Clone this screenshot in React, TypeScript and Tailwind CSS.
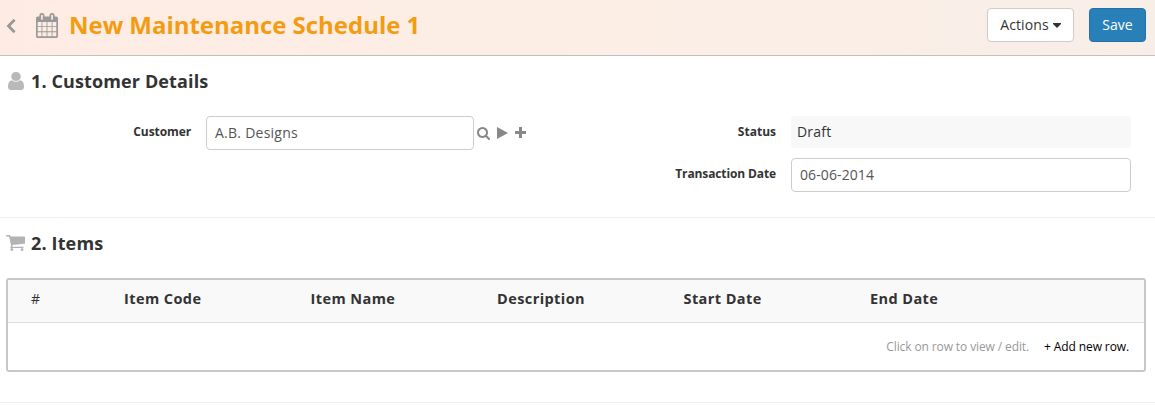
import React from "react";

const CALENDAR =
  "M192 1664h288v-288h-288v288zM544 1664h320v-288h-320v288zM192 1312h288v-320h-288v320zM544 1312h320v-320h-320v320zM192 928h288v-288h-288v288zM928 1664h320v-288h-320v288zM544 928h320v-288h-320v288zM1312 1664h288v-288h-288v288zM928 1312h320v-320h-320v320zM576 448v-288q0-13-9.5-22.5t-22.5-9.5h-64q-13 0-22.5 9.5t-9.5 22.5v288q0 13 9.5 22.5t22.5 9.5h64q13 0 22.5-9.5t9.5-22.5zM1312 1312h288v-320h-288v320zM928 928h320v-288h-320v288zM1312 928h288v-288h-288v288zM1344 448v-288q0-13-9.5-22.5t-22.5-9.5h-64q-13 0-22.5 9.5t-9.5 22.5v288q0 13 9.5 22.5t22.5 9.5h64q13 0 22.5-9.5t9.5-22.5zM1728 384v1280q0 52-38 90t-90 38h-1408q-52 0-90-38t-38-90v-1280q0-52 38-90t90-38h128v-96q0-66 47-113t113-47h64q66 0 113 47t47 113v96h384v-96q0-66 47-113t113-47h64q66 0 113 47t47 113v96h128q52 0 90 38t38 90z";
const USER =
  "M1536 1399q0 109-62.5 187t-150.5 78h-854q-88 0-150.5-78t-62.5-187q0-85 8.5-160.5t31.5-152 58.5-131 94-89 134.5-34.5q131 128 313 128t313-128q76 0 134.5 34.5t94 89 58.5 131 31.5 152 8.5 160.5zm-256-887q0 159-112.5 271.5t-271.5 112.5-271.5-112.5-112.5-271.5 112.5-271.5 271.5-112.5 271.5 112.5 112.5 271.5z";
const CART =
  "M704 1536q0 52-38 90t-90 38-90-38-38-90 38-90 90-38 90 38 38 90zm896 0q0 52-38 90t-90 38-90-38-38-90 38-90 90-38 90 38 38 90zm128-1088v512q0 24-16.5 42.5t-40.5 21.5l-1044 122q13 60 13 70 0 16-24 64h920q26 0 45 19t19 45-19 45-45 19h-1024q-26 0-45-19t-19-45q0-11 8-31.5t16-36 21.5-40 15.5-29.5l-177-823h-204q-26 0-45-19t-19-45 19-45 45-19h256q16 0 28.5 6.5t19.5 15.5 13 24.5 8 26 5.5 29.5 4.5 26h1201q26 0 45 19t19 45z";
const SEARCH =
  "M1216 832q0-185-131.5-316.5t-316.5-131.5-316.5 131.5-131.5 316.5 131.5 316.5 316.5 131.5 316.5-131.5 131.5-316.5zm512 832q0 52-38 90t-90 38q-54 0-90-38l-343-342q-179 124-399 124-143 0-273.5-55.5t-225-150-150-225-55.5-273.5 55.5-273.5 150-225 225-150 273.5-55.5 273.5 55.5 225 150 150 225 55.5 273.5q0 220-124 399l343 343q37 37 37 90z";

function Icon({ d, box, className }: { d: string; box: string; className: string }) {
  return (
    <svg viewBox={box} preserveAspectRatio="none" fill="currentColor" className={`shrink-0 ${className}`} aria-hidden="true">
      <path d={d} />
    </svg>
  );
}

const columns = ["Item Code", "Item Name", "Description", "Start Date", "End Date"];

export default function App() {
  return (
    <div className="h-[410px] w-[1155px] overflow-hidden bg-white font-['Open_Sans',sans-serif] text-[14px] leading-5 text-[#333333]">
      <header className="flex h-14 items-start border-b border-[#c0c0c0] bg-gradient-to-r from-[#feece4] via-[#fceee5] to-[#f8eee8]">
        <svg viewBox="0 0 10 16" className="mt-[18px] ml-[6px] h-4 w-[10px] shrink-0 text-[#999999]" fill="none" stroke="currentColor" strokeWidth="2.8" aria-hidden="true">
          <path d="M8.6 1.8 2.5 8l6.1 6.2" />
        </svg>
        <Icon d={CALENDAR} box="64 0 1664 1792" className="mt-[13px] ml-5 h-[25px] w-[22px] text-[#999999]" />
        <h1 className="mt-2 ml-[11px] text-[24px] leading-[34px] font-bold tracking-[-0.03px] whitespace-nowrap text-[#f39c12]">New Maintenance Schedule 1</h1>
        <div className="mt-2 mr-[9px] ml-auto flex gap-[15px]">
          <button className="flex h-[34px] w-[87px] items-center justify-center gap-1 rounded border border-[#cccccc] bg-white">
            <span className="tracking-[0.1px]">Actions</span>
            <svg viewBox="0 0 8 5" className="h-[5px] w-2" fill="currentColor" aria-hidden="true">
              <path d="M0 0h8v1L4 5 0 1z" />
            </svg>
          </button>
          <button className="h-[34px] w-[57px] rounded border border-[#2472a4] bg-[#2980b9] text-white">Save</button>
        </div>
      </header>

      <section className="h-[162px] border-b border-[#eeeeee]">
        <div className="flex h-[60px] items-start pl-2">
          <Icon d={USER} box="256 128 1280 1536" className="mt-4 h-[18px] w-4 text-[#b9b9b9]" />
          <h2 className="mt-[13px] ml-[7px] text-[18px] leading-6 font-bold tracking-[0.12px]">1. Customer Details</h2>
        </div>
        <div className="flex items-start">
          <div className="flex w-[585px] items-start">
            <label className="mt-[6px] w-[191px] text-right text-[12px] font-bold tracking-[-0.1px]">Customer</label>
            <div className="ml-[15px] flex h-[34px] w-[268px] items-center rounded border border-[#cccccc] px-2 tracking-[0.25px] text-[#555555]">A.B. Designs</div>
            <div className="mt-[11px] ml-[3px] flex text-[#888888]">
              <Icon d={SEARCH} box="64 128 1664 1664" className="h-[13px] w-[13px]" />
              <Icon d="M0 0 11 6 0 12z" box="0 0 11 12" className="ml-[7px] h-3 w-[11px]" />
              <Icon d="M4 0h3v4h4v3H7v4H4V7H0V4h4z" box="0 0 11 11" className="ml-[7px] h-[11px] w-[11px]" />
            </div>
          </div>
          <div className="flex flex-col gap-[10px]">
            <div className="flex">
              <label className="mt-[6px] w-[191px] text-right text-[12px] font-bold">Status</label>
              <div className="ml-[15px] flex h-8 w-[340px] items-center rounded-sm bg-[#f8f8f8] px-[6px] tracking-[0.2px]">Draft</div>
            </div>
            <div className="flex">
              <label className="mt-[6px] w-[191px] text-right text-[12px] font-bold tracking-[-0.12px]">Transaction Date</label>
              <div className="ml-[15px] flex h-[34px] w-[340px] items-center rounded border border-[#cccccc] px-2 tracking-[0.1px] text-[#555555]">06-06-2014</div>
            </div>
          </div>
        </div>
      </section>

      <section className="h-[185px] border-b border-[#eeeeee]">
        <div className="flex h-[60px] items-start pl-[6px]">
          <Icon d={CART} box="64 256 1664 1408" className="mt-[17px] h-4 w-[19px] text-[#b3b3b3]" />
          <h2 className="mt-[13px] ml-[6px] text-[18px] leading-6 font-bold tracking-[0.15px]">2. Items</h2>
        </div>
        <div className="mr-[9px] ml-[6px] h-[94px] rounded-[3px] border-2 border-[#c7c7c7]">
          <div className="flex h-[43px] border-b border-[#dddddd] bg-[#f9f9f9] pt-[9px] pl-[23px]">
            <div className="w-[93px]">#</div>
            {columns.map((name) => (
              <div key={name} className="w-[186.5px] text-[14.5px] font-bold tracking-[0.42px]">{name}</div>
            ))}
          </div>
          <div className="flex justify-end gap-[15px] pt-[14px] pr-[15px] text-[12px] tracking-[-0.11px]">
            <span className="text-[#999999]">Click on row to view / edit.</span>
            <span className="text-black">+ Add new row.</span>
          </div>
        </div>
      </section>
    </div>
  );
}
